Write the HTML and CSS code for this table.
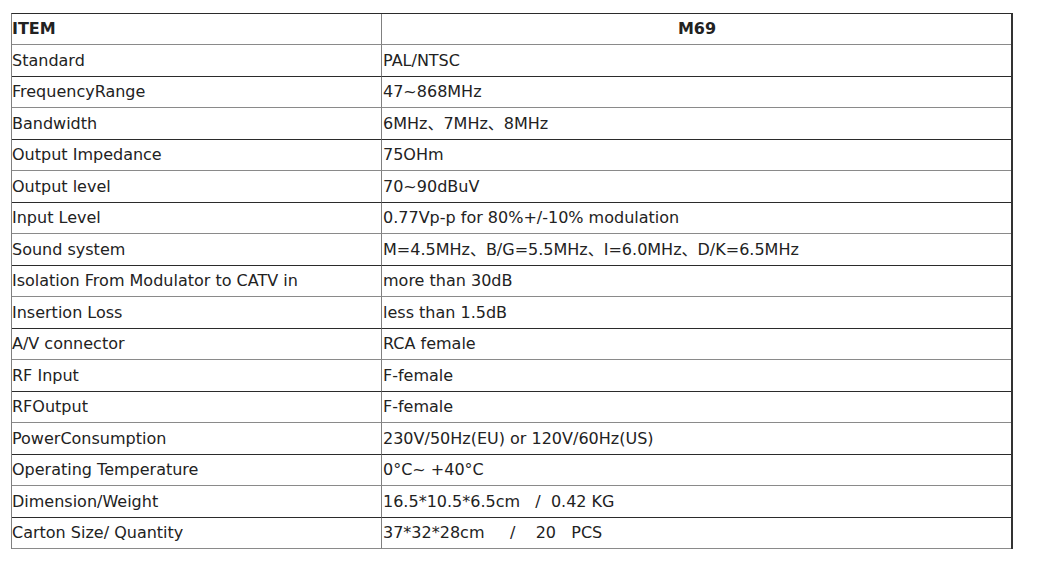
FILE: index.html
```html
<!DOCTYPE html>
<html>
<head>
<meta charset="utf-8">
<link rel="stylesheet" href="styles.css">
</head>
<body>
<table class="spec">
  <tr class="r-odd head"><td class="c1">ITEM</td><td class="c2 center">M69</td></tr>
  <tr class="r-even"><td class="c1">Standard</td><td class="c2">PAL/NTSC</td></tr>
  <tr class="r-odd"><td class="c1">FrequencyRange</td><td class="c2">47~868MHz</td></tr>
  <tr class="r-even"><td class="c1">Bandwidth</td><td class="c2">6MHz、7MHz、8MHz</td></tr>
  <tr class="r-odd"><td class="c1">Output Impedance</td><td class="c2">75OHm</td></tr>
  <tr class="r-even"><td class="c1">Output level</td><td class="c2">70~90dBuV</td></tr>
  <tr class="r-odd"><td class="c1">Input Level</td><td class="c2">0.77Vp-p for 80%+/-10% modulation</td></tr>
  <tr class="r-even"><td class="c1">Sound system</td><td class="c2">M=4.5MHz、B/G=5.5MHz、I=6.0MHz、D/K=6.5MHz</td></tr>
  <tr class="r-odd"><td class="c1">Isolation From Modulator to CATV in</td><td class="c2">more than 30dB</td></tr>
  <tr class="r-even"><td class="c1">Insertion Loss</td><td class="c2">less than 1.5dB</td></tr>
  <tr class="r-odd"><td class="c1">A/V connector</td><td class="c2">RCA female</td></tr>
  <tr class="r-even"><td class="c1">RF Input</td><td class="c2">F-female</td></tr>
  <tr class="r-odd"><td class="c1">RFOutput</td><td class="c2">F-female</td></tr>
  <tr class="r-even"><td class="c1">PowerConsumption</td><td class="c2">230V/50Hz(EU) or 120V/60Hz(US)</td></tr>
  <tr class="r-odd"><td class="c1">Operating Temperature</td><td class="c2">0°C~ +40°C</td></tr>
  <tr class="r-even"><td class="c1">Dimension/Weight</td><td class="c2">16.5*10.5*6.5cm &nbsp; / &nbsp;0.42 KG</td></tr>
  <tr class="r-odd"><td class="c1">Carton Size/ Quantity</td><td class="c2">37*32*28cm &nbsp; &nbsp; / &nbsp; &nbsp;20 &nbsp; PCS</td></tr>
</table>
</body>
</html>
```
FILE: styles.css
```css
html, body {
  margin: 0;
  padding: 0;
  background: #ffffff;
}

.spec {
  margin: 13px 0 0 11px;
  border-collapse: separate;
  border-spacing: 0;
  width: 1002px;
  table-layout: fixed;
  border-top: 1px solid #2b2b2b;
  border-left: 1px solid #808080;
  border-right: 2px solid #333333;
  font-family: "DejaVu Sans", "Noto Sans CJK SC", sans-serif;
  font-size: 16px;
  color: #222222;
}

.spec td {
  padding: 0 0 0 1px;
  vertical-align: middle;
  white-space: nowrap;
  line-height: 20px;
}

.spec .c1 {
  width: 369px;
  padding-left: 0;
  border-right: 1px solid #808080;
}

.spec .c2 {
  padding-left: 1px;
}

.spec .center {
  text-align: center;
}

.r-odd {
  height: 31px;
}

.r-odd td {
  border-bottom: 1px solid #8a8a8a;
}

.r-even {
  height: 32px;
}

.r-even td {
  border-bottom: 1px solid #2b2b2b;
}

.head td {
  font-weight: bold;
}
```
